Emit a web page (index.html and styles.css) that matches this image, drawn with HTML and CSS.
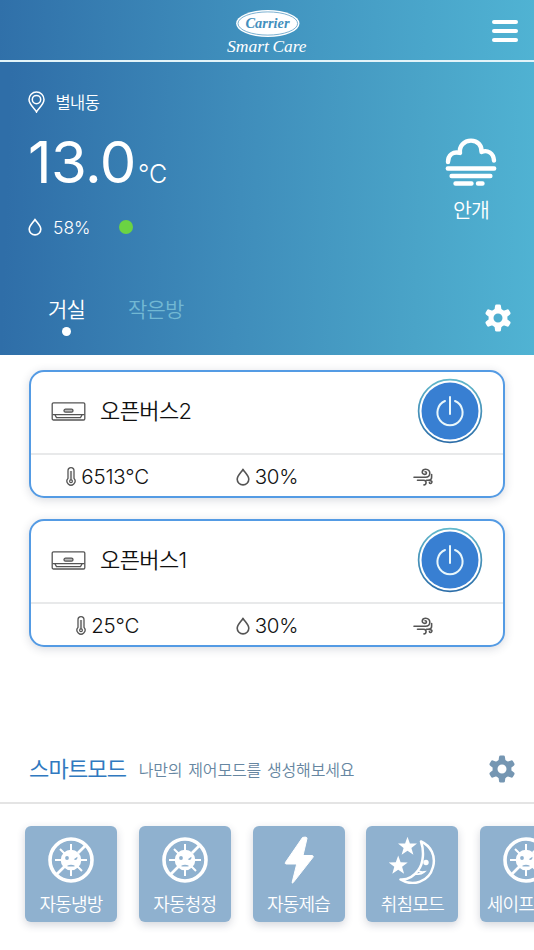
FILE: index.html
```html
<!DOCTYPE html>
<html lang="ko">
<head>
<meta charset="utf-8">
<title>Carrier Smart Care</title>
<link rel="stylesheet" href="styles.css">
</head>
<body>
<svg class="defs" width="0" height="0" aria-hidden="true">
  <defs>
    <linearGradient id="ring" x1="0" y1="0" x2="0" y2="1"><stop offset="0" stop-color="#62b8cb"/><stop offset="1" stop-color="#2c6da8"/></linearGradient>
    <symbol id="gear" viewBox="0 0 26 28">
      <g fill="currentColor">
        <path fill-rule="evenodd" d="M13 4.500a9.500 9.500 0 1 0 0 19 9.500 9.500 0 0 0 0-19zm0 5a4.500 4.500 0 1 1 0 9 4.500 4.500 0 0 1 0-9z"/>
        <path id="tooth" d="M9.300 7l.8-5.200Q10.300.6 11.500.6h3q1.200 0 1.400 1.200L16.700 7z"/>
        <use href="#tooth" transform="rotate(60 13 14)"/><use href="#tooth" transform="rotate(120 13 14)"/><use href="#tooth" transform="rotate(180 13 14)"/><use href="#tooth" transform="rotate(240 13 14)"/><use href="#tooth" transform="rotate(300 13 14)"/>
      </g>
    </symbol>
    <symbol id="drop" viewBox="0 0 14 18"><path d="M7 1.300C5.600 4.200 1.200 7.600 1.200 11.300a5.800 5.600 0 0 0 11.600 0C12.800 7.600 8.400 4.200 7 1.300z" fill="none" stroke="currentColor" stroke-width="1.600" stroke-linejoin="round"/></symbol>
    <symbol id="thermo" viewBox="0 0 10 19"><g fill="none" stroke="currentColor"><path d="M2 11.400V3.700a3 3 0 0 1 6 0v7.700a4 4 0 1 1-6 0z" stroke-width="1.300"/><path d="M5 4v9" stroke-width="2.200" stroke="#888"/><circle cx="5" cy="14.200" r="1.400" stroke-width="1.200"/></g></symbol>
    <symbol id="wind" viewBox="0 0 20 18"><g fill="none" stroke="currentColor" stroke-width="1.600" stroke-linecap="round"><path d="M1 9.200h11.500c5.600 0 5.800-8 .2-8-4.200 0-4.600 5.200-1 5.200 2.200 0 2.300-2.700.4-2.600"/><path d="M4.500 12.300h6.200c3.200 0 3 4.600.3 4.600"/><path d="M18.600 6.500v2.700c0 2-1.600 3-3.600 3h-1.500M14.500 12.300c4 0 4.900 1 4.200 2.400-.7 1.200-2.300.9-2.300-.2"/></g></symbol>
    <symbol id="aircon" viewBox="0 0 34 19"><g fill="none" stroke="currentColor" stroke-width="1.300"><rect x=".7" y=".8" width="32.600" height="17.200" rx="1.300"/><path d="M1 12.700h32M3.500 13l1.500 2.600h24l1.500-2.600"/><rect x="12.500" y="7.200" width="9" height="3" rx="1.500" fill="#bbb"/></g></symbol>
    <symbol id="power" viewBox="0 0 66 66"><circle cx="33" cy="33" r="31.400" fill="#fff" stroke="url(#ring)" stroke-width="1.700"/><circle cx="33" cy="33" r="28.500" fill="#387fd2"/><g fill="none" stroke="#e9f7fb" stroke-width="2" stroke-linecap="round"><path d="M28 23a12.600 12.600 0 1 0 10 0M33 19v17"/></g></symbol>
    <symbol id="virus" viewBox="0 0 48 48"><g fill="none" stroke="#fff"><circle cx="24" cy="24" r="21" stroke-width="3.600"/><path d="M9 39l9-9M31 17l8-8" stroke-width="2.800"/><path d="M24 8v32M8 24h32M13 13l22 22" stroke-width="2"/></g><circle cx="24" cy="24" r="10.300" fill="#fff"/><g fill="#8fb1cf"><circle cx="20" cy="22" r="1.900"/><path d="M26.800 23.300l3.600-2.500v1.400q-.5 1.800-2 1.800zM20.500 29.400q3.500-1.400 7 0v1.200h-7z"/></g></symbol>
    <symbol id="bolt" viewBox="0 0 48 48"><path d="M27.500 1.500L10.500 26.300q-1 1.400.7 1.700h10.500l-4.500 18.200q-.2 1.600 1 .4L38 21.300q.8-1.500-.8-1.800H28L32 2.400q0-2-4.500-.9z" fill="#fff" stroke="#fff"/></symbol>
    <symbol id="moon" viewBox="0 0 48 48"><g fill="#fff"><path d="M19.500 .8l2.400 6.600 7.100.2-5.600 4.300 2 6.900-5.900-4-5.900 4 2-6.900-5.600-4.300 7.100-.2zM10.200 19.600l2.400 6.700 7.100.2-5.600 4.300 2 6.900-5.900-4-5.900 4 2-6.900-5.600-4.300 7.100-.2z"/><circle cx="38" cy="26.500" r="2.700"/></g><path d="M33 5.500C43 10 48 20 45 31 41 46 25 51 12.500 43.500 20 44 26 40 30 34.500 36 27 36 14 33 5.500z" fill="none" stroke="#fff" stroke-width="2.500" stroke-linejoin="round"/><path d="M29.500 34.500q2.500 2 6.500 1.500-3.500 3-9 1.800" fill="none" stroke="#fff" stroke-width="1.800"/></symbol>
  </defs>
</svg>
<main class="app">
  <header class="topbar">
    <svg class="logo" viewBox="0 0 92 52" width="92" height="52">
      <ellipse cx="46.800" cy="15.500" rx="31.700" ry="13.400" fill="#fff"/>
      <ellipse cx="46.800" cy="15.500" rx="29.800" ry="11.600" fill="none" stroke="#438fbd" stroke-width=".7"/>
      <text x="24.500" y="19.500" class="brand" textLength="44" lengthAdjust="spacingAndGlyphs">Carrier</text>
      <text x="6" y="44" class="product" textLength="42" lengthAdjust="spacingAndGlyphs">Smart</text>
      <text x="51.500" y="44" class="product" textLength="34" lengthAdjust="spacingAndGlyphs">Care</text>
    </svg>
    <div class="menu"><i></i><i></i><i></i></div>
  </header>
  <section class="weather">
    <div class="summary">
      <div class="readings">
        <div class="place"><svg width="17" height="22" viewBox="0 0 17 22"><g fill="none" stroke="#fff" stroke-width="1.500"><path d="M8.500 21C7.500 18 1 14 1 8.600a7.500 7.500 0 0 1 15 0C16 14 9.500 18 8.500 21z"/><circle cx="8.500" cy="8.600" r="4.200"/></g></svg><span>별내동</span></div>
        <div class="temp"><span class="degrees">13.0</span><span class="unit">°C</span></div>
        <div class="humidity"><svg width="14" height="18"><use href="#drop"/></svg><span>58%</span><i class="air"></i></div>
      </div>
      <div class="sky">
        <svg width="52" height="49" viewBox="0 0 52 49"><g fill="none" stroke="#fff" stroke-width="4.400" stroke-linecap="round"><path d="M3 24C3 17 8 13 15 15 14 8 19 2.600 26 2.600S37 8 36.500 14c6-2.500 12 1 12.500 8.500" stroke-linejoin="round"/><path d="M2.800 30.500h46.400M6.600 38h38.800M10.500 45.500h16M33 45.500h4.500"/></g></svg>
        <span>안개</span>
      </div>
    </div>
    <div class="rooms">
      <div class="room active"><span>거실</span><i></i></div>
      <div class="room"><span>작은방</span></div>
      <svg class="settings" width="26" height="28"><use href="#gear"/></svg>
    </div>
  </section>
  <section class="devices">
    <article class="card">
      <div class="device"><svg class="unit-icon" width="35" height="19"><use href="#aircon"/></svg><span class="name">오픈버스2</span><svg class="power" width="66" height="66"><use href="#power"/></svg></div>
      <div class="stats"><div><svg width="10" height="19"><use href="#thermo"/></svg><span>6513°C</span></div><div><svg width="14" height="18"><use href="#drop"/></svg><span>30%</span></div><div><svg width="20" height="18"><use href="#wind"/></svg></div></div>
    </article>
    <article class="card">
      <div class="device"><svg class="unit-icon" width="35" height="19"><use href="#aircon"/></svg><span class="name">오픈버스1</span><svg class="power" width="66" height="66"><use href="#power"/></svg></div>
      <div class="stats"><div><svg width="10" height="19"><use href="#thermo"/></svg><span>25°C</span></div><div><svg width="14" height="18"><use href="#drop"/></svg><span>30%</span></div><div><svg width="20" height="18"><use href="#wind"/></svg></div></div>
    </article>
  </section>
  <section class="modes">
    <div class="modes-head"><h2>스마트모드</h2><p>나만의 제어모드를 생성해보세요</p><svg width="26" height="28"><use href="#gear"/></svg></div>
    <div class="tiles">
      <div class="tile"><svg width="48" height="48"><use href="#virus"/></svg><span>자동냉방</span></div>
      <div class="tile"><svg width="48" height="48"><use href="#virus"/></svg><span>자동청정</span></div>
      <div class="tile"><svg width="48" height="48"><use href="#bolt"/></svg><span>자동제습</span></div>
      <div class="tile"><svg width="48" height="48"><use href="#moon"/></svg><span>취침모드</span></div>
      <div class="tile"><svg width="48" height="48"><use href="#virus"/></svg><span>세이프모드</span></div>
    </div>
  </section>
</main>
</body>
</html>
```
FILE: styles.css
```css
* { box-sizing: border-box; margin: 0; padding: 0; }
body { width: 534px; height: 950px; overflow: hidden; background: #fff; font-family: Inter, "Noto Sans CJK KR", sans-serif; font-weight: 350; color: #111; }
svg { display: block; flex: none; }
span, h2, p { white-space: nowrap; }
.defs { position: absolute; }
.app { width: 534px; height: 950px; overflow: hidden; display: flex; flex-direction: column; }

.topbar { height: 62px; flex: none; border-bottom: 2px solid #e3f4f9; background: linear-gradient(92deg, #3070a9, #4193bf 50%, #50b3d3) border-box; display: grid; grid-template-columns: 1fr 92px 1fr; align-items: start; }
.logo { grid-column: 2; margin-top: 8px; }
.brand { font: italic 700 14px "Liberation Serif", serif; fill: #438fbd; }
.product { font: italic 400 17px "Liberation Serif", serif; fill: #fff; }
.menu { justify-self: end; margin: 20px 16px 0 0; width: 26px; display: flex; flex-direction: column; gap: 5.500px; }
.menu i { height: 3.700px; border-radius: 2px; background: #fff; }

.weather { height: 293px; flex: none; background: linear-gradient(92deg, #2f6ea8 2%, #3f8dbb 45%, #4aa4c8 78%, #50b3d3); color: #fff; padding: 29px 0 0 28px; }
.summary { display: flex; justify-content: space-between; height: 190px; }
.place { display: flex; align-items: center; height: 22px; font-size: 16.500px; gap: 10.500px; letter-spacing: -.6px; }
.place span { line-height: 22px; margin-top: 1px; }
.temp { display: flex; align-items: baseline; height: 68px; margin-top: 15px; line-height: 68px; }
.degrees { font-size: 58px; letter-spacing: -.5px; font-weight: 380; }
.unit { font-size: 25px; font-weight: 350; margin-left: 2px; }
.humidity { display: flex; align-items: center; margin-top: 21px; height: 20px; font-size: 17.500px; }
.humidity span { margin-left: 11px; }
.air { width: 14px; height: 14px; border-radius: 50%; background: #6bd343; margin-left: 29px; }
.sky { width: 52px; margin: 47px 37px 0 0; display: flex; flex-direction: column; align-items: center; }
.sky span { font-size: 20.500px; line-height: 24px; margin-top: 12px; letter-spacing: -.8px; }
.rooms { display: flex; padding-left: 20px; padding-top: 17px; }
.room { display: flex; flex-direction: column; align-items: center; font-size: 21px; line-height: 24px; letter-spacing: -.8px; margin-right: 43px; color: #72b8d3; }
.room.active { color: #fff; }
.room i { width: 9px; height: 9px; border-radius: 50%; background: #fff; margin-top: 5px; }
.settings { margin: 6px 23px 0 auto; }

.devices { padding: 15px 29px 0; display: flex; flex-direction: column; gap: 21px; height: 377px; flex: none; }
.card { height: 128px; border: 2px solid #549be4; border-radius: 15px; box-shadow: 0 2px 10px rgba(40,50,80,.18); background: #fff; }
.device { height: 83px; display: flex; align-items: center; padding: 0 20px 2px; border-bottom: 2px solid #e8e9ea; }
.unit-icon { color: #555; }
.power { margin-top: -1px; }
.name { font-size: 22px; line-height: 28px; letter-spacing: -.6px; margin: -1px auto 0 14px; }
.stats { display: grid; grid-template-columns: repeat(3, 1fr); height: 43px; color: #555; }
.stats div { display: flex; align-items: center; justify-content: center; gap: 5px; padding-right: 4px; }
.stats div:nth-child(2) { padding-right: 0; }
.stats div:nth-child(3) { padding-right: 3px; }
.stats span { font-size: 20.500px; letter-spacing: -.2px; color: #111; }

.modes-head { height: 72px; display: flex; align-items: center; padding: 4px 19px 0 29px; border-bottom: 2px solid #e4e4e4; color: #7596b2; }
.modes-head h2 { font-size: 22px; line-height: 28px; font-weight: 400; letter-spacing: -.8px; margin-top: -1px; color: #3079c0; }
.modes-head p { font-size: 16px; letter-spacing: -.15px; word-spacing: 1.500px; margin: 0 auto 0 12.500px; color: #6686a1; }
.tiles { display: flex; gap: 21.800px; padding: 22px 0 0 25px; }
.tile { width: 92px; height: 96px; flex: none; border-radius: 6px; background: #8fb1cf; box-shadow: 0 3px 8px rgba(40,50,80,.2); color: #fff; display: flex; flex-direction: column; align-items: center; padding-top: 10px; }
.tile span { font-size: 18px; line-height: 22px; letter-spacing: -.8px; margin-top: 10px; }
```
